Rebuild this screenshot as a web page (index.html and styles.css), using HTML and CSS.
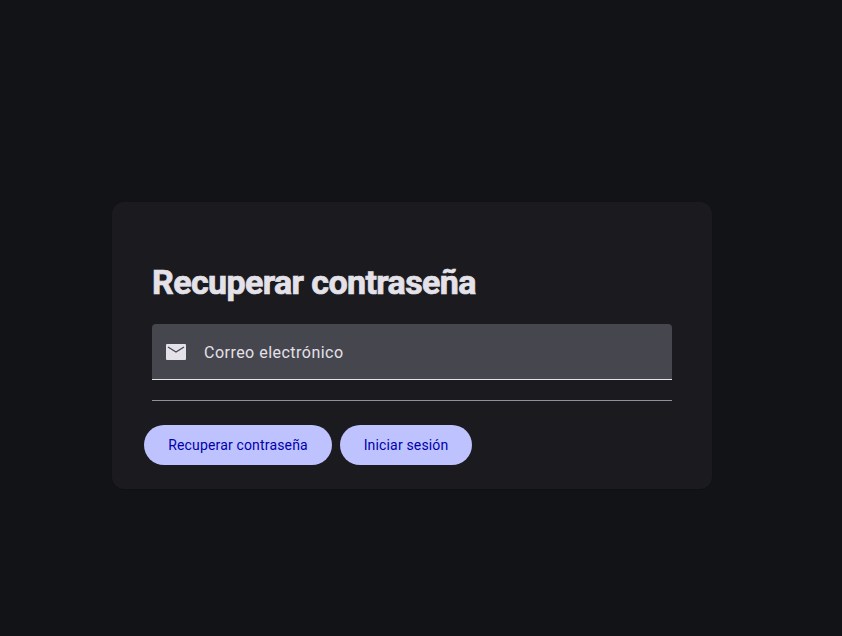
FILE: index.html
```html
<!DOCTYPE html>
<html lang="es">
<head>
<meta charset="utf-8">
<title>Recuperar contraseña</title>
<link rel="stylesheet" href="styles.css">
</head>
<body>
<main class="card">
  <h1 class="title">Recuperar contraseña</h1>
  <label class="field">
    <svg class="icon" viewBox="0 0 24 24"><path fill="currentColor" d="M3 4h18q1 0 1 1v14q0 1-1 1H3q-1 0-1-1V5q0-1 1-1z"/><path class="flap" d="M4 7l8 5 8-5"/></svg>
    <span class="label">Correo electrónico</span>
  </label>
  <hr class="divider">
  <div class="actions">
    <button class="button recover">Recuperar contraseña</button>
    <button class="button login">Iniciar sesión</button>
  </div>
</main>
</body>
</html>
```
FILE: styles.css
```css
* { box-sizing: border-box; }
body {
  margin: 0;
  height: 636px;
  padding-top: 202px;
  background: #121316;
  color: #e4e1e9;
  font-family: Roboto, sans-serif;
}
.card {
  width: 600px;
  height: 287px;
  margin-left: 112px;
  padding: 60px 32px 24px;
  border-radius: 12px;
  background: #1b1b1f;
  box-shadow: 0 1px 1px rgba(0, 0, 0, .14);
}
.title {
  margin: 0 8px 22px;
  font-size: 34px;
  line-height: 40px;
  font-weight: 700;
  letter-spacing: -.61px;
  -webkit-text-stroke: .7px currentColor;
}
.field {
  display: flex;
  align-items: center;
  height: 56px;
  margin: 0 8px;
  border-bottom: 1px solid #e4e1e9;
  border-radius: 4px 4px 0 0;
  background: #46464f;
}
.icon { width: 24px; height: 24px; margin: 1px 16px 0 12px; }
.flap { fill: none; stroke: #46464f; stroke-width: 1.3; }
.label { padding-top: 2px; font-size: 16px; line-height: 24px; letter-spacing: .48px; }
.divider { margin: 20px 8px 24px; border: 0; border-top: 1px solid #90909a; }
.actions { display: flex; gap: 8px; }
.button {
  height: 40px;
  padding: 0;
  border: 0;
  border-radius: 20px;
  background: #bec2ff;
  color: #0000ac;
  font: 400 14px/20px Roboto, sans-serif;
  letter-spacing: .16px;
}
.recover { width: 188px; }
.login { width: 132px; }
```
